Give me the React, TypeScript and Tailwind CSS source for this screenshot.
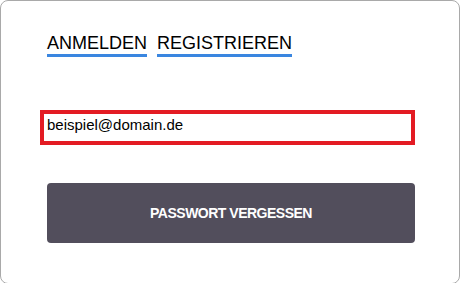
export default function App() {
  return (
    <div className="w-[460px] h-[283px] overflow-hidden bg-white" style={{ fontFamily: '"Liberation Sans", Arial, sans-serif' }}>
      <div className="h-[284px] rounded-[8px] border border-[#a9a9a9] bg-white pl-[39px] pr-[44px] pt-[31px]">
        {/* Tabs */}
        <div className="ml-[7px] flex gap-[10px]">
          <div className="border-b-[3px] border-[#3a86e0] text-[18px] leading-[22px] text-black">ANMELDEN</div>
          <div className="border-b-[3px] border-[#3a86e0] text-[18px] leading-[22px] text-black">REGISTRIEREN</div>
        </div>

        {/* Email */}
        <div className="mt-[53px] h-[35px] border-4 border-[#e31b23] pl-[3px] pr-[4px] pt-[2px] text-[15px] leading-[18px] text-black">
          beispiel@domain.de
        </div>

        {/* Button */}
        <button className="ml-[7px] mt-[38px] flex h-[60px] w-[368px] items-center justify-center rounded-[4px] bg-[#524e5c] text-[14px] font-bold tracking-[-0.5px] text-white">
          PASSWORT VERGESSEN
        </button>
      </div>
    </div>
  );
}
